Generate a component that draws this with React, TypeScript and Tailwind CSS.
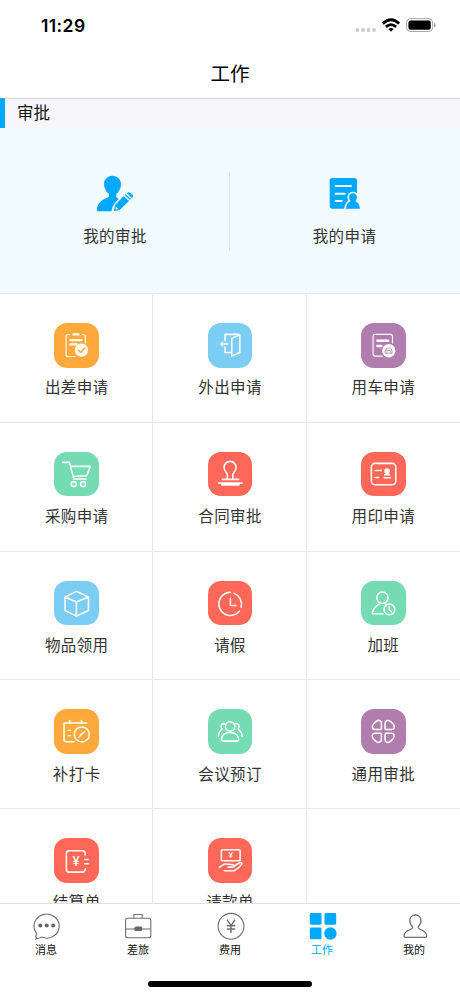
import type { ReactNode } from 'react';

const yenFont = 'Inter, "Liberation Sans", sans-serif';

function Tile({ className, children }: { className: string; children: ReactNode }) {
  return (
    <div className={`h-[44.5px] w-[44.5px] rounded-[13px] ${className}`}>
      <svg
        viewBox="0 0 133 133"
        className="block h-full w-full"
        fill="none"
        stroke="white"
        strokeWidth="4.6"
        strokeLinecap="round"
        strokeLinejoin="round"
      >
        {children}
      </svg>
    </div>
  );
}

const ORANGE = 'bg-[#ffa93d]';
const SKY = 'bg-[#7bcdf3]';
const PURPLE = 'bg-[#b07dae]';
const GREEN = 'bg-[#74dbb3]';
const RED = 'bg-[#ff6858]';

type Item = { label: string; color: string; icon: ReactNode };

const items: Item[] = [
  {
    label: '出差申请',
    color: ORANGE,
    icon: (
      <>
        <path d="M47 35H41Q36 35 36 40V94Q36 100 42 100H62M84 35H89Q94 35 94 40V60" strokeWidth="3.4" />
        <path d="M58 34H73" strokeWidth="6.5" />
        <path d="M49 51H82M49 64H67" strokeWidth="7" />
        <circle cx="82" cy="81" r="20" fill="white" stroke="none" />
        <path d="M73 81L80 88L92 75" stroke="#ffa93d" />
      </>
    ),
  },
  {
    label: '外出申请',
    color: SKY,
    icon: (
      <>
        <path d="M51 53V34H92M51 72V88H68" />
        <path d="M71 46L95 35V88L71 99Z" />
        <path d="M43 63H60" />
        <path d="M43 57L36 63L43 69Z" fill="white" strokeWidth="2" />
      </>
    ),
  },
  {
    label: '用车申请',
    color: PURPLE,
    icon: (
      <>
        <path d="M64 99H42Q36 99 36 93V40Q36 34 42 34H88Q94 34 94 40V60" strokeWidth="3.4" />
        <path d="M49 53H81M49 69H61" strokeWidth="7.5" />
        <circle cx="83" cy="83" r="20" fill="white" stroke="none" />
        <path
          d="M74 81L77 75H89L92 81M73 82H93V90H73ZM76 90V92M90 90V92M77 86H78M88 86H89"
          stroke="#b07dae"
          strokeWidth="2.2"
        />
      </>
    ),
  },
  {
    label: '采购申请',
    color: GREEN,
    icon: (
      <>
        <path d="M26 31H46L58 75" />
        <path d="M50 43H108L98 71L57 73" />
        <path d="M59 81H96" />
        <circle cx="59" cy="96" r="7.5" />
        <circle cx="87" cy="96" r="7.5" />
      </>
    ),
  },
  {
    label: '合同审批',
    color: RED,
    icon: (
      <>
        <path d="M58 80V68C58 63 48 57 48 46A18 18 0 0 1 84 46C84 57 74 63 74 68V80" />
        <path d="M43 82H91" strokeWidth="5" />
        <path d="M32 93H102" strokeWidth="5" />
        <path d="M42 98H92" strokeWidth="6" />
      </>
    ),
  },
  {
    label: '用印申请',
    color: RED,
    icon: (
      <>
        <rect x="31" y="34" width="73" height="64" rx="11" />
        <path d="M42 55H61M42 76H53" />
        <circle cx="78" cy="57" r="8.5" fill="white" stroke="none" />
        <path d="M75 62H81V67H86V69H70V67H75Z" fill="white" strokeWidth="3" />
        <path d="M69 77H88" strokeWidth="4" />
      </>
    ),
  },
  {
    label: '物品领用',
    color: SKY,
    icon: (
      <path d="M67 31L103 48V88L67 105L33 88V48ZM33 48L67 63L103 48M67 63V105" />
    ),
  },
  {
    label: '请假',
    color: RED,
    icon: (
      <>
        <path d="M67 34A34.5 34.5 0 1 0 94 90" />
        <path d="M78 37A34 34 0 0 1 99 78" />
        <path d="M67 52V73H83" />
      </>
    ),
  },
  {
    label: '加班',
    color: GREEN,
    icon: (
      <>
        <circle cx="64" cy="50" r="17" />
        <path d="M66 98H34C34 85 43 76 54 69M74 69L77 70" />
        <circle cx="85" cy="85" r="16" />
        <path d="M84 76V86L91 92" strokeWidth="3.6" />
      </>
    ),
  },
  {
    label: '补打卡',
    color: ORANGE,
    icon: (
      <>
        <path d="M60 98H36Q30 98 30 92V42H98" />
        <path d="M47 35V42M82 35V42" strokeWidth="5" />
        <path d="M42 64H50M42 80H50" strokeWidth="3.4" />
        <circle cx="83" cy="76" r="22.5" />
        <path d="M92 67L74 85L80 76Z" fill="white" strokeWidth="3" />
      </>
    ),
  },
  {
    label: '会议预订',
    color: GREEN,
    icon: (
      <>
        <circle cx="66" cy="52" r="14" />
        <path d="M46 96C38 96 40 88 43 82C49 66 83 66 89 82C92 88 94 96 86 96Z" />
        <path d="M50 44C39 42 36 53 42 60C35 65 31 73 31 82" />
        <path d="M82 44C93 42 96 53 90 60C97 65 102 73 102 82" />
      </>
    ),
  },
  {
    label: '通用审批',
    color: PURPLE,
    icon: (
      <>
        {[0, 90, 180, 270].map((angle) => (
          <path
            key={angle}
            transform={`rotate(${angle} 66.5 67)`}
            d="M61 58V42C61 33 51 32 45 37L38 44C31 51 33 61.5 43 61.5H57.5Q61 61.5 61 58Z"
          />
        ))}
      </>
    ),
  },
  {
    label: '结算单',
    color: RED,
    icon: (
      <>
        <path d="M93 51V46Q93 38 85 38H45Q37 38 37 46V94Q37 102 45 102H85Q92 102 94 92" />
        <path d="M92 64H103M92 77H103" />
        <text x="66" y="85" textAnchor="middle" fill="white" stroke="none" fontSize="38" fontWeight="500" fontFamily={yenFont}>¥</text>
      </>
    ),
  },
  {
    label: '请款单',
    color: RED,
    icon: (
      <>
        <rect x="40" y="35" width="56" height="33" rx="3" />
        <text x="68" y="60" textAnchor="middle" fill="white" stroke="none" fontSize="24" fontWeight="500" fontFamily={yenFont}>¥</text>
        <path d="M34 88L45 80Q49 77 54 78L76 80Q80 84 75 87H60" />
        <path d="M78 84L94 74Q102 71 101 78Q92 91 78 98H48" />
      </>
    ),
  },
];

function ApproverIcon() {
  return (
    <svg viewBox="288 40 114 114" className="h-[38px] w-[38px]" fill="#00a8ff">
      <path d="M337 45C322 45 312 56 312 70C312 83 318 94 327 100V107C325 114 290 116 291 152H335C336 138 341 130 356 115L349 110V100C357 94 363 83 363 70C363 56 352 45 337 45Z" />
      <path d="M342 151L345 133L371 106L387 121L359 148Z" />
      <path d="M374 103L377 100L393 115L390 118Z" />
      <path d="M380 97Q386 92 392 97L398 103Q402 108 396 112Z" />
      <path d="M348 138L354 144L347 147Z" fill="#f1faff" />
    </svg>
  );
}

const badgePerson =
  'M1059 98C1051 98 1047 104 1047 110C1047 115 1049 118 1052 121C1044 125 1039 132 1038 144H1080C1079 132 1074 125 1066 121C1069 118 1071 115 1071 110C1071 104 1067 98 1059 98Z';

function RequestIcon() {
  return (
    <svg viewBox="984 46 100 104" className="h-[34.7px] w-[33.3px]" fill="#00a8ff">
      <rect x="989" y="52" width="82" height="92" rx="7" />
      <path d="M1007 76H1053M1007 99H1034M1007 121H1025" stroke="#f1faff" strokeWidth="6" strokeLinecap="round" />
      <path d={badgePerson} stroke="#f1faff" strokeWidth="10" />
      <path d={badgePerson} />
    </svg>
  );
}

function StatusBar() {
  return (
    <div className="flex h-[50px] shrink-0 items-center justify-between pr-[24px] pl-[41px]">
      <span className="pt-px font-[Inter,'Liberation_Sans',sans-serif] text-[17.5px] leading-[24px] font-semibold tracking-[0.4px] text-black">11:29</span>
      <svg viewBox="354 15 82 20" className="h-[20px] w-[82px]">
        <g fill="#cbcbcb">
          <circle cx="357.5" cy="30" r="1.9" />
          <circle cx="363" cy="30" r="1.9" />
          <circle cx="368.5" cy="30" r="1.9" />
          <circle cx="374" cy="30" r="1.9" />
        </g>
        <g fill="none" stroke="black" strokeWidth="2.8">
          <path d="M382.8 23.6Q391 16 399.2 23.6" />
          <path d="M385.9 26.9Q391 22.3 396.1 26.9" />
        </g>
        <path d="M388.4 28.9Q391 26.9 393.6 28.9L391 31.7Z" />
        <rect x="406.6" y="18.7" width="26" height="12.8" rx="3.8" fill="none" stroke="#a5a5a5" />
        <rect x="408.4" y="20.5" width="22.4" height="9.2" rx="2.2" />
        <path d="M434 23V27.5Q435.6 26.8 435.6 25.2Q435.6 23.6 434 23Z" fill="#999" />
      </svg>
    </div>
  );
}

const outline = { fill: 'none', stroke: '#6e6e6e', strokeWidth: 1.1 };

const tabs: { label: string; active?: boolean; icon: ReactNode }[] = [
  {
    label: '消息',
    icon: (
      <>
        <path {...outline} d="M4.7 24.8L5.5 21.3A12.6 12 0 1 1 10.5 25.1Q8 26.7 4.7 27Q5.8 25.5 4.7 24.8Z" />
        <g fill="#666">
          <circle cx="9.3" cy="13.6" r="2" />
          <circle cx="15.7" cy="13.6" r="2" />
          <circle cx="22.2" cy="13.6" r="2" />
        </g>
      </>
    ),
  },
  {
    label: '差旅',
    icon: (
      <>
        <rect {...outline} x="2.6" y="6.2" width="25.2" height="19.6" rx="2" />
        <path {...outline} d="M10.9 6.2V2.5H19.1V6.2M2.6 17H27.8" />
        <rect x="11.3" y="14.5" width="8" height="4.6" rx="1.7" fill="#666" />
      </>
    ),
  },
  {
    label: '费用',
    icon: (
      <>
        <circle {...outline} cx="16" cy="14.3" r="12.9" />
        <path {...outline} strokeWidth={1.4} d="M12 7.7L16 13.7L20 7.7M16 13.7V21M11.8 13.8H20.2M11.8 17H20.2" />
      </>
    ),
  },
  {
    label: '工作',
    active: true,
    icon: (
      <g fill="#00a8ff">
        <rect x="2.8" y="1" width="11.7" height="11.7" rx="1.4" />
        <rect x="17.5" y="1" width="11.7" height="11.7" rx="1.4" />
        <rect x="2.8" y="15.6" width="11.7" height="11.7" rx="1.4" />
        <circle cx="23.4" cy="21.5" r="6.2" />
      </g>
    ),
  },
  {
    label: '我的',
    icon: (
      <path
        {...outline}
        strokeWidth={1.3}
        d="M16.4 3C12.9 3 10.8 5.4 10.8 8.5C10.8 11.4 12 13.3 13.5 14.5V16C12 18.2 5 18 5 24Q5 25.4 6.4 25.4H26.3Q27.7 25.4 27.7 24C27.7 18 20.8 18.2 19.3 16V14.5C20.8 13.3 22 11.4 22 8.5C22 5.4 19.9 3 16.4 3Z"
      />
    ),
  },
];

export default function App() {
  return (
    <div className="flex h-[996px] w-[460px] flex-col overflow-hidden bg-white font-['Noto_Sans_CJK_SC',sans-serif] text-[#333]">
      <StatusBar />
      <header className="flex h-[48px] shrink-0 items-center justify-center pb-[2px] text-[19.5px] leading-[28px] text-black">
        <h1>工作</h1>
      </header>
      <div className="flex h-[30px] shrink-0 items-start border-t border-[#d5d5da] bg-[#f5f5fa]">
        <span className="-mt-px h-[30px] w-[5px] bg-[#00a8ff]" />
        <h2 className="mt-px ml-[12px] text-[16.5px] leading-[24px] text-[#111]">审批</h2>
      </div>

      <section className="flex h-[166px] shrink-0 items-start border-b border-[#e5e9ec] bg-[#f1faff]">
        <div className="flex w-[229px] flex-col items-center pt-[46px] pl-px">
          <ApproverIcon />
          <span className="mt-[11.4px] text-[15.5px] leading-[24px] tracking-[0.4px]">我的审批</span>
        </div>
        <div className="mt-[44px] h-[79px] w-px bg-[#dde3e7]" />
        <div className="flex w-[229px] flex-col items-center pt-[48px]">
          <RequestIcon />
          <span className="mt-[12.7px] text-[15.5px] leading-[24px] tracking-[0.4px]">我的申请</span>
        </div>
      </section>

      <main className="min-h-0 flex-1 overflow-hidden">
        <div className="grid auto-rows-[128.8px] grid-cols-[153.4px_153.3px_153.3px]">
          {items.map((item) => (
            <div
              key={item.label}
              className="flex flex-col items-center border-r border-b border-[#e8e8e8] pt-[29px] pl-px nth-[3n]:border-r-0 nth-[3n]:pl-0"
            >
              <Tile className={item.color}>{item.icon}</Tile>
              <span className="mt-[6.8px] text-[15.5px] leading-[24px] tracking-[0.4px]">{item.label}</span>
            </div>
          ))}
          <div className="border-b border-[#e8e8e8]" />
        </div>
      </main>

      <nav className="flex h-[93px] shrink-0 flex-col items-center border-t border-[#dedede] bg-white">
        <div className="grid w-full grid-cols-5 pt-[8px]">
          {tabs.map((tab) => (
            <div key={tab.label} className="flex flex-col items-center">
              <svg viewBox="0 0 32 29" className="ml-[2px] h-[29px] w-[32px]">
                {tab.icon}
              </svg>
              <span className={`text-[11px] leading-[16px] ${tab.active ? 'text-[#00a8ff]' : 'text-[#111]'}`}>{tab.label}</span>
            </div>
          ))}
        </div>
        <div className="mt-[24px] h-[6px] w-[164px] rounded-full bg-black" />
      </nav>
    </div>
  );
}
